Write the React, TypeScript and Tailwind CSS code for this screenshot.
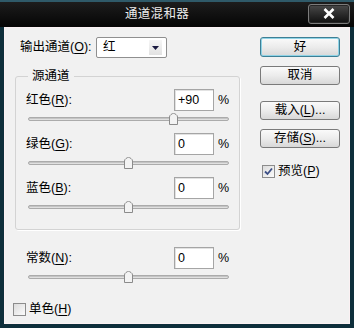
import React from "react";

const FONT = "font-['Liberation_Sans','Noto_Sans_CJK_SC',sans-serif]";

// Label with an underlined mnemonic key, e.g. 红色(R):
function Mn({ text, k, tail = "" }: { text: string; k: string; tail?: string }) {
  return (
    <span className="whitespace-nowrap">
      {text}(<span className="underline underline-offset-2">{k}</span>){tail}
    </span>
  );
}

function Slider({ pct }: { pct: number }) {
  return (
    <div className="relative mt-[2px] h-[12px] w-[201px] ml-[12px]">
      <div className="absolute left-0 right-0 top-[4px] h-[4px] rounded-full border border-[#ababab] bg-[#e0e0e0] shadow-[inset_0_1px_0_#c4c4c4]" />
      <svg
        className="absolute top-0"
        style={{ left: `${pct * 200 - 4}px` }}
        width="9"
        height="12"
        viewBox="0 0 9 12"
      >
        <path
          d="M0.5 11.5 V4 Q0.5 2.5 2 1.5 L3.5 0.6 Q4.5 0.1 5.5 0.6 L7 1.5 Q8.5 2.5 8.5 4 V11.5 Z"
          fill="#f3f3f3"
          stroke="#8b8b8b"
        />
      </svg>
    </div>
  );
}

function ValueRow({
  label,
  value,
  pct,
}: {
  label: React.ReactNode;
  value: string;
  pct: number;
}) {
  return (
    <div>
      <div className="flex items-center">
        <div className="w-[158px] pl-[10px]">{label}</div>
        <div className="flex h-[22px] w-[40px] items-center border border-[#a5a5a5] bg-white pl-[3px] shadow-[inset_1px_1px_0_#e2e2e2]">
          {value}
        </div>
        <span className="ml-[4px]">%</span>
      </div>
      <Slider pct={pct} />
    </div>
  );
}

function Btn({
  children,
  primary,
  className = "",
}: {
  children: React.ReactNode;
  primary?: boolean;
  className?: string;
}) {
  return (
    <div
      className={
        "flex w-[80px] items-center justify-center rounded-[3px] border bg-gradient-to-b from-[#fafafa] via-[#ececec] to-[#d8d8d8] " +
        (primary
          ? "h-[20px] border-[#3d7f95] shadow-[inset_0_0_0_1px_#8fd3e6] "
          : "h-[19px] border-[#7a7a7a] ") +
        className
      }
    >
      {children}
    </div>
  );
}

function Check({ checked }: { checked?: boolean }) {
  return (
    <div className="flex h-[13px] w-[13px] items-center justify-center border border-[#8c8c8c] bg-gradient-to-br from-[#dcdcdc] to-[#fbfbfb]">
      {checked && (
        <svg width="9" height="9" viewBox="0 0 9 9">
          <path d="M1 4.5 L3.5 7 L8 1.5" fill="none" stroke="#3c4f86" strokeWidth="1.8" />
        </svg>
      )}
    </div>
  );
}

export default function App() {
  return (
    <div
      className={`${FONT} flex h-[328px] w-[354px] flex-col border-t-2 border-[#2f5a69] bg-[#0e2f3b] text-[12.5px] leading-none text-black`}
    >
      {/* Title bar */}
      <div className="flex h-[25px] items-center bg-gradient-to-b from-[#1d1d1d] to-[#060606] pl-[4px] pr-[4px]">
        <div className="flex-1 pl-[2px] text-center text-[12.5px] tracking-[0.3px] text-[#ececec]">
          通道混和器
        </div>
        <div className="-mt-[2px] flex h-[20px] w-[42px] items-center justify-center rounded-[3px] border border-[#7c7c7c] bg-gradient-to-b from-[#4a4a4a] to-[#111111] shadow-[inset_0_0_0_1px_#262626]">
          <svg width="12" height="11" viewBox="0 0 12 11">
            <path d="M1.5 1 L10.5 10 M10.5 1 L1.5 10" stroke="#ffffff" strokeWidth="2.6" />
          </svg>
        </div>
      </div>

      {/* Client area */}
      <div className="mx-[4px] mb-[4px] flex flex-1 bg-[#f1f1f1] shadow-[inset_0_0_0_1px_#fbf1f3]">
        {/* Left column */}
        <div className="w-[256px] pl-[11px] pt-[10px]">
          <div className="flex h-[21px] items-center">
            <div className="w-[81px] pl-[5px]">
              <Mn text="输出通道" k="O" tail=":" />
            </div>
            <div className="flex h-[21px] w-[71px] items-center justify-between rounded-[2px] border border-[#8f8f8f] bg-white pl-[6px] pr-[4px]">
              <span>红</span>
              <div className="flex h-[15px] w-[13px] items-center justify-center bg-gradient-to-b from-[#f6f6f6] to-[#e2e2e2]">
                <svg width="7" height="4" viewBox="0 0 7 4">
                  <path d="M0 0 H7 L3.5 4 Z" fill="#1a1a40" />
                </svg>
              </div>
            </div>
          </div>

          <fieldset className="mt-[10px] h-[162px] w-[225px] rounded-[3px] border border-[#d3d3d3] shadow-[1px_1px_0_#ffffff]">
            <legend className="ml-[12px] px-[4px] leading-[16px]">源通道</legend>
            <div className="mt-[5px] flex flex-col gap-[8px]">
              <ValueRow label={<Mn text="红色" k="R" tail=":" />} value="+90" pct={0.725} />
              <ValueRow label={<Mn text="绿色" k="G" tail=":" />} value="0" pct={0.5} />
              <ValueRow label={<Mn text="蓝色" k="B" tail=":" />} value="0" pct={0.5} />
            </div>
          </fieldset>

          <div className="mt-[17px] w-[225px] pl-[1px]">
            <ValueRow label={<Mn text="常数" k="N" tail=":" />} value="0" pct={0.5} />
          </div>

          <div className="-ml-[2px] mt-[20px] flex items-center gap-[3px]">
            <Check />
            <Mn text="单色" k="H" />
          </div>
        </div>

        {/* Right column */}
        <div className="pt-[10px]">
          <Btn primary>好</Btn>
          <Btn className="mt-[9px]">取消</Btn>
          <Btn className="mt-[16px]">
            <Mn text="载入" k="L" tail="..." />
          </Btn>
          <Btn className="mt-[9px]">
            <Mn text="存储" k="S" tail="..." />
          </Btn>
          <div className="ml-[2px] mt-[17px] flex items-center gap-[3px]">
            <Check checked />
            <Mn text="预览" k="P" />
          </div>
        </div>
      </div>
    </div>
  );
}
